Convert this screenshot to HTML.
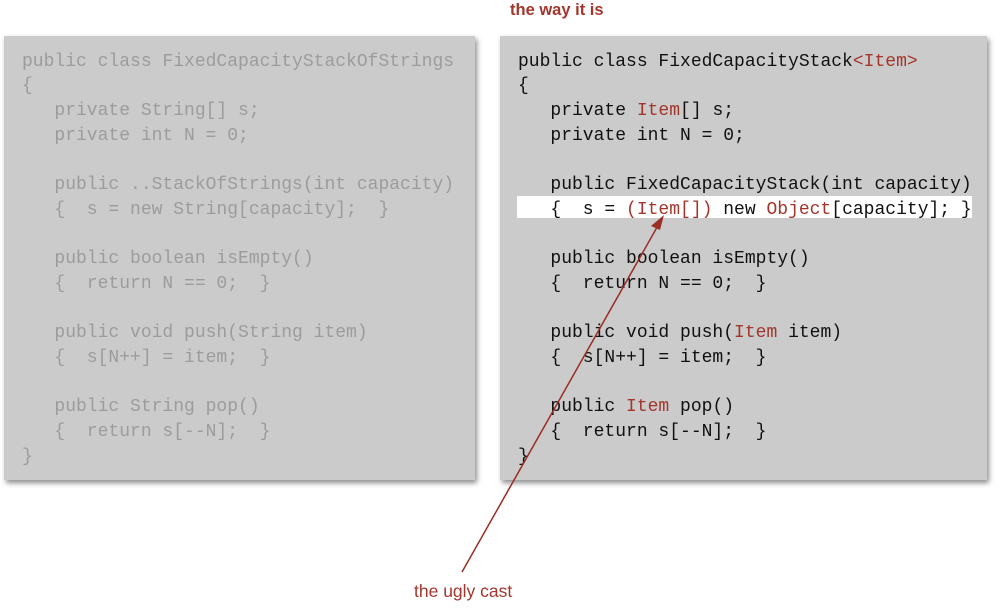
<!DOCTYPE html>
<html><head><meta charset="utf-8"><style>
body{margin:0;width:1003px;height:609px;background:#fff;position:relative;overflow:hidden;font-family:"Liberation Sans",sans-serif}
.p{position:absolute;top:36px;height:444px;background:#cbcbcb;box-shadow:2px 3px 5px rgba(0,0,0,.45)}
pre{position:absolute;margin:0;font-family:"Liberation Mono",monospace;font-size:18px;line-height:24.69px;top:49.7px}
.r{color:#a3362c}
.hl{position:absolute;left:517px;top:196px;width:455px;height:22px;background:#fff}
.t{position:absolute;color:#a3362c;font-size:17.5px}
</style></head><body>
<div class="p" style="left:4px;width:471px"></div>
<div class="p" style="left:500px;width:487px"></div>
<div class="hl"></div>
<pre style="left:22px;color:#9c9c9c">public class FixedCapacityStackOfStrings
{
   private String[] s;
   private int N = 0;

   public ..StackOfStrings(int capacity)
   {  s = new String[capacity];  }

   public boolean isEmpty()
   {  return N == 0;  }

   public void push(String item)
   {  s[N++] = item;  }

   public String pop()
   {  return s[--N];  }
}</pre>
<pre style="left:518px;color:#111">public class FixedCapacityStack<span class="r">&lt;Item&gt;</span>
{
   private <span class="r">Item</span>[] s;
   private int N = 0;

   public FixedCapacityStack(int capacity)
   {  s = <span class="r">(Item[])</span> new <span class="r">Object</span>[capacity]; }

   public boolean isEmpty()
   {  return N == 0;  }

   public void push(<span class="r">Item</span> item)
   {  s[N++] = item;  }

   public <span class="r">Item</span> pop()
   {  return s[--N];  }
}</pre>
<div class="t" style="left:510px;top:1px;font-weight:bold;font-size:16.5px">the way it is</div>
<div class="t" style="left:414px;top:581px">the ugly cast</div>
<svg style="position:absolute;left:0;top:0" width="1003" height="609">
<line x1="462" y1="572" x2="660" y2="222" stroke="#9a2e25" stroke-width="1.5"/>
<polygon points="664,215 651,226 660,230" fill="#9a2e25"/>
</svg>
</body></html>
